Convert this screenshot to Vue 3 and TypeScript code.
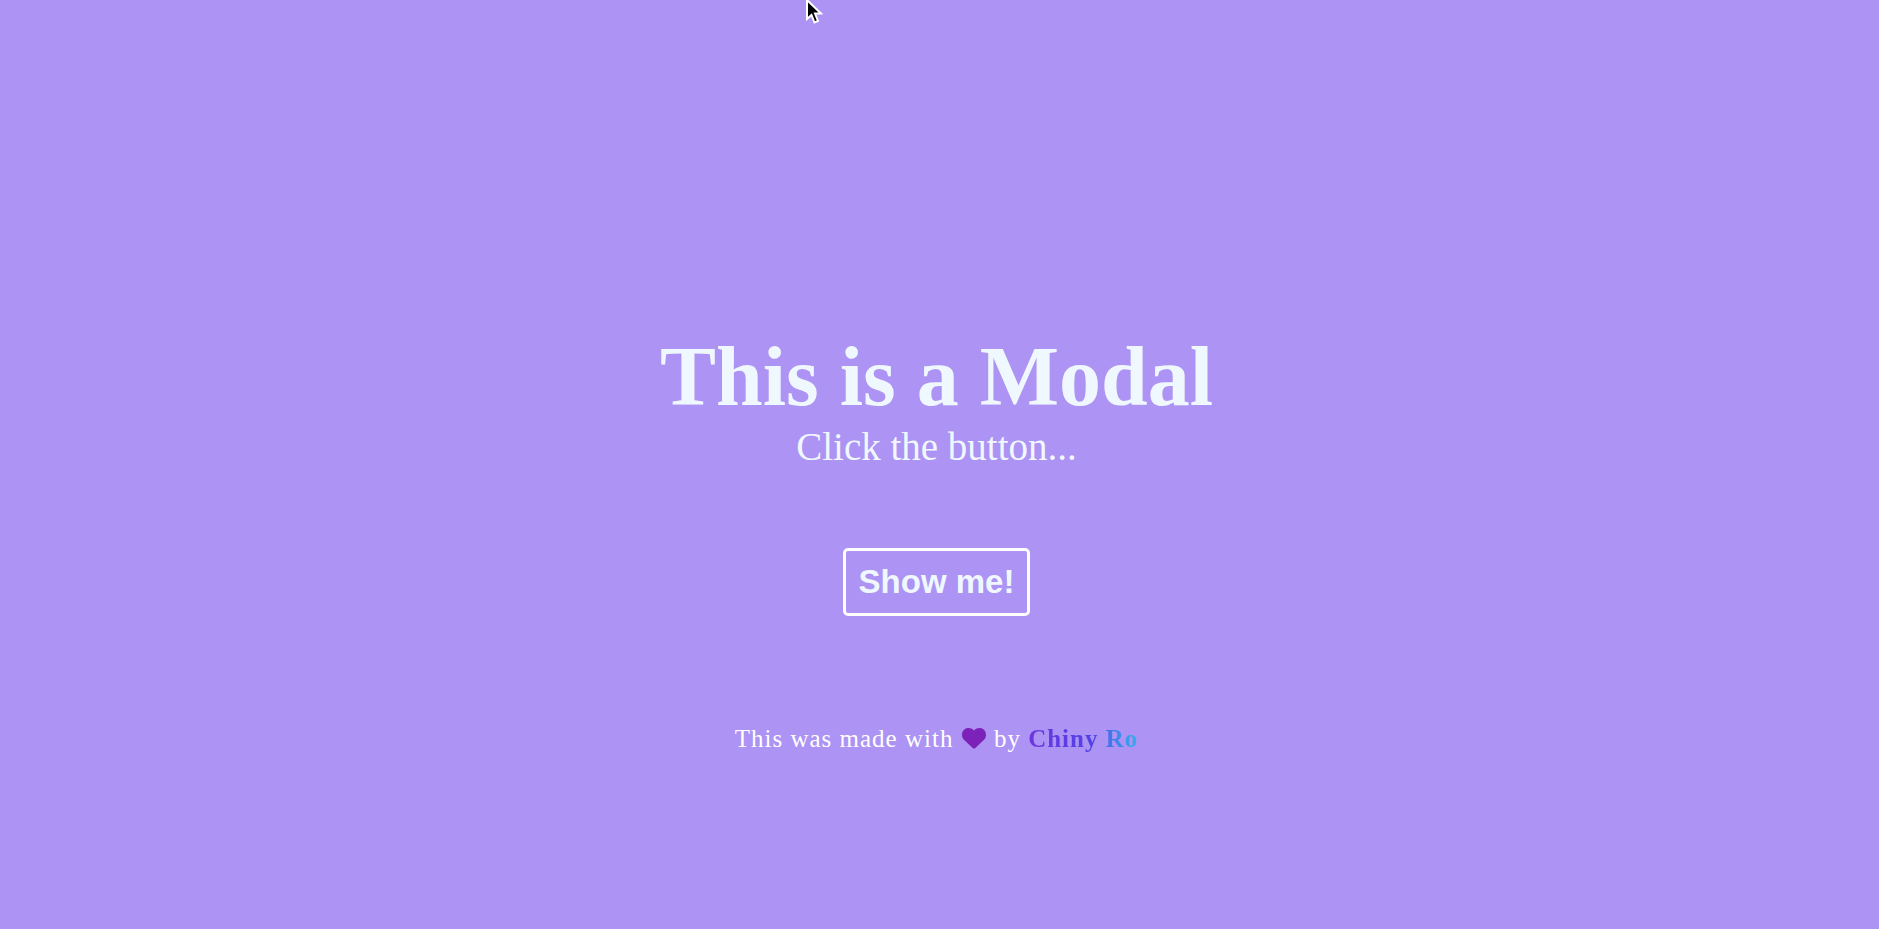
<script setup lang="ts">
const author: string = 'Chiny Ro'
</script>

<template>
  <main class="page">
    <h1 class="title">This is a Modal</h1>
    <p class="subtitle">Click the button...</p>
    <button class="show" type="button">Show me!</button>
    <footer class="credit">
      This was made with
      <svg class="heart" viewBox="0 0 512 512" aria-hidden="true">
        <path
          d="M47.6 300.4L228.3 469.1c7.5 7 17.4 10.9 27.7 10.9s20.2-3.9 27.7-10.9L464.4 300.4c30.4-28.3 47.6-68 47.6-109.5v-5.8c0-69.9-50.5-129.5-119.4-141C347 36.5 300.6 51.4 268 84L256 96 244 84c-32.6-32.6-79-47.5-124.6-39.9C50.5 55.6 0 115.2 0 185.1v5.8c0 41.5 17.2 81.2 47.6 109.5z"
        />
      </svg>
      by <a class="author" href="#">{{ author }}</a>
    </footer>

    <svg class="pointer" viewBox="0 0 18 26" aria-hidden="true">
      <path d="M2 1V20L6.500 16L9.500 23.500L13 22L10 14.500H16Z" />
    </svg>
  </main>
</template>

<style>
body {
  margin: 0;
  background: #ad93f3;
}
</style>

<style scoped>
.page {
  box-sizing: border-box;
  position: relative;
  min-height: 100vh;
  padding: 152px 6px 0 0;
  display: flex;
  flex-direction: column;
  align-items: center;
  justify-content: center;
  overflow: hidden;
  color: aliceblue;
  font-family: "Liberation Serif", "Times New Roman", serif;
}

.title {
  margin: 0;
  font-size: 84px;
  line-height: 96px;
}

.subtitle {
  margin: 0;
  font-size: 39px;
  line-height: 44px;
}

.show {
  margin: 79px 0 109px;
  padding: 12px 13px;
  border: 3px solid #fff;
  border-radius: 5px;
  background: transparent;
  color: aliceblue;
  font: bold 33px/38px "Liberation Sans", Arial, sans-serif;
  cursor: pointer;
}

.credit {
  color: #fff;
  font-size: 25px;
  line-height: 28px;
  letter-spacing: 1px;
}

.heart {
  width: 24px;
  height: 24px;
  margin: 0 1px;
  fill: #7d22b8;
  vertical-align: -3px;
}

.author {
  background: linear-gradient(90deg, #6d35df, #5044e6 60%, #3f80ea 78%, #35aeea);
  background-clip: text;
  -webkit-background-clip: text;
  color: transparent;
  font-weight: bold;
  text-decoration: none;
}

.pointer {
  position: absolute;
  top: -1px;
  left: 805px;
  width: 18px;
  height: 26px;
  fill: #000;
  stroke: #fff;
  stroke-width: 2px;
}
</style>
